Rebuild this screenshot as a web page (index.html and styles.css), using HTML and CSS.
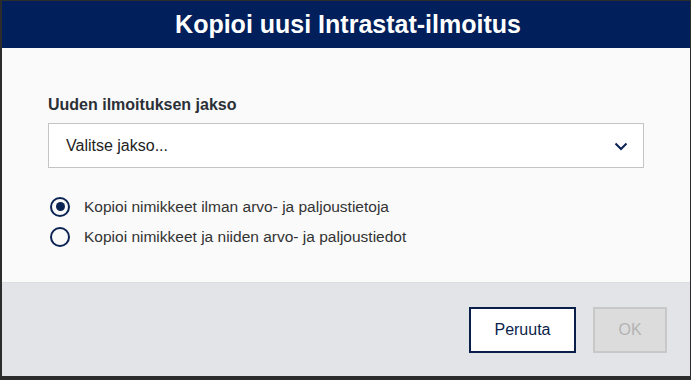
FILE: index.html
```html
<!DOCTYPE html>
<html lang="fi">
<head>
<meta charset="utf-8">
<link rel="stylesheet" href="styles.css">
</head>
<body>
<div class="dialog">
  <header class="dialog-header">
    <h1 class="dialog-title">Kopioi uusi Intrastat-ilmoitus</h1>
  </header>
  <main class="dialog-body">
    <label class="field-label">Uuden ilmoituksen jakso</label>
    <div class="select">
      <span class="select-text">Valitse jakso...</span>
      <svg class="chevron" width="14" height="9" viewBox="0 0 14 9"><path d="M1.5 1.5 L7 7 L12.5 1.5" fill="none" stroke="#0b2352" stroke-width="2"/></svg>
    </div>
    <div class="radios">
      <div class="radio-row">
        <span class="radio checked"></span>
        <span class="radio-text">Kopioi nimikkeet ilman arvo- ja paljoustietoja</span>
      </div>
      <div class="radio-row">
        <span class="radio"></span>
        <span class="radio-text">Kopioi nimikkeet ja niiden arvo- ja paljoustiedot</span>
      </div>
    </div>
  </main>
  <footer class="dialog-footer">
    <button class="btn btn-secondary">Peruuta</button>
    <button class="btn btn-disabled">OK</button>
  </footer>
</div>
</body>
</html>
```
FILE: styles.css
```css
html, body {
  margin: 0;
  padding: 0;
  background: #2c2c2c;
  width: 691px;
  height: 380px;
  overflow: hidden;
}
body {
  font-family: "Liberation Sans", Arial, sans-serif;
}
.dialog {
  margin: 1px 1px 0 2px;
  width: 688px;
  height: 375px;
  display: flex;
  flex-direction: column;
  background: #fafafa;
}
.dialog-header {
  height: 47px;
  background: #001f5b;
  display: flex;
  align-items: center;
  justify-content: center;
}
.dialog-title {
  margin: 0;
  color: #ffffff;
  font-size: 25px;
  font-weight: bold;
  line-height: 1;
  padding-bottom: 1px;
  padding-left: 4px;
}
.dialog-body {
  flex: 1;
  padding: 48px 46px 0 46px;
  display: flex;
  flex-direction: column;
}
.field-label {
  font-size: 16px;
  font-weight: bold;
  color: #2b2f36;
  line-height: 17px;
  height: 17px;
}
.select {
  margin-top: 10px;
  height: 43px;
  border: 1px solid #c4c4c4;
  background: #ffffff;
  display: flex;
  align-items: center;
  justify-content: space-between;
  padding: 0 15px 0 17px;
}
.select-text {
  font-size: 16px;
  color: #222;
}
.chevron {
  display: block;
  margin-top: 1px;
}
.radios {
  margin-top: 29px;
  display: flex;
  flex-direction: column;
  gap: 11px;
}
.radio-row {
  display: flex;
  align-items: center;
  height: 19px;
}
.radio {
  box-sizing: border-box;
  width: 20px;
  height: 20px;
  border: 2.5px solid #0b2352;
  border-radius: 50%;
  margin-left: 2px;
  margin-right: 14px;
  display: flex;
  align-items: center;
  justify-content: center;
}
.radio.checked::after {
  content: "";
  width: 9px;
  height: 9px;
  border-radius: 50%;
  background: #0b2352;
}
.radio-text {
  font-size: 15.5px;
  color: #333;
}
.dialog-footer {
  height: 93px;
  border-top: 1px solid #dcdde2;
  background: #e3e4e8;
  display: flex;
  align-items: center;
  justify-content: flex-end;
  gap: 17px;
  padding-right: 23px;
}
.btn {
  box-sizing: border-box;
  height: 46px;
  font-family: "Liberation Sans", Arial, sans-serif;
  font-size: 16px;
  margin-top: 1px;
}
.btn-secondary {
  width: 107px;
  background: #ffffff;
  border: 2px solid #0b1f4b;
  color: #0b1f4b;
}
.btn-disabled {
  width: 74px;
  background: #dcdcdc;
  border: 2px solid #c8c8c8;
  color: #b3b3b3;
}
```
